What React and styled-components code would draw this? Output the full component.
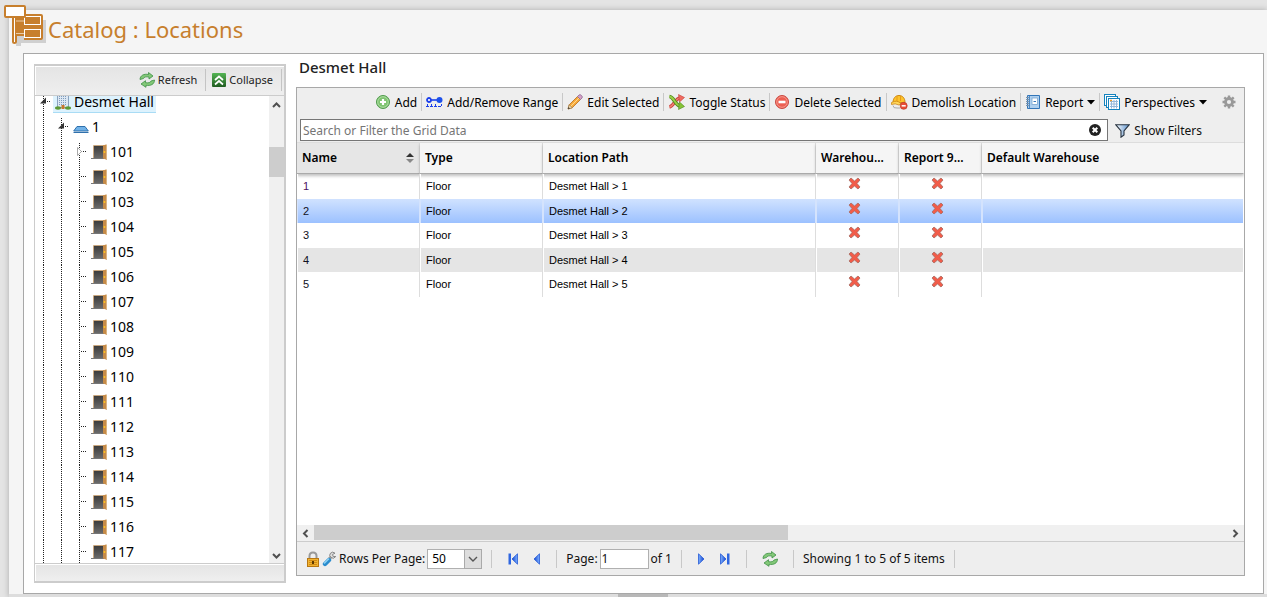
import styled, { createGlobalStyle } from "styled-components";

const GlobalStyle = createGlobalStyle`
    * {
        box-sizing : border-box;
    }

    body {
        margin : 0;
        font-family : "Trebuchet MS", "Noto Sans", "Open Sans", sans-serif;
        font-size : 12px;
        color : #111;
    }

    button, input, select {
        font-family : inherit;
        color : inherit;
    }
`;

const Page = styled.div`
    height : 100vh;
    padding : 10px 0 0 9px;
    background-color : #e4e4e4;
    display : flex;
    flex-direction : column;
    overflow : hidden;
`;

const Sheet = styled.div`
    flex : 1;
    min-height : 0;
    display : flex;
    flex-direction : column;
    background-color : #f5f5f5;
    box-shadow : 0 0 6px rgba(0,0,0,0.25);
`;

const Header = styled.header`
    height : 43px;
    flex : none;
    display : flex;
    align-items : flex-start;
`;

const Logo = styled.svg`
    width : 46px;
    height : 46px;
    flex : none;
    margin : -8px 0 0 -7px;
`;

const Heading = styled.h1`
    margin : 0;
    font-size : 22px;
    font-weight : 400;
    line-height : 38px;
    color : #c77f2d;
`;

const Panel = styled.main`
    flex : 1;
    min-height : 0;
    margin : 0 3px 0 14px;
    padding : 0 18px 10px 10px;
    border : 1px solid #a8a8a8;
    background-color : #fff;
    display : flex;
    gap : 10px;
`;

const Splitter = styled.div`
    height : 3px;
    flex : none;
    padding-left : 10px;
    background-color : #ddd;
    display : flex;
    justify-content : center;
`;

const Handle = styled.div`
    width : 50px;
    background-color : #b8b8b8;
`;

const Sidebar = styled.aside`
    width : 252px;
    flex : none;
    margin-top : 10px;
    border : 2px solid #ccc;
    border-left-width : 1px;
    display : flex;
    flex-direction : column;
`;

const SideBar = styled.div`
    height : ${(props) => props.$height}px;
    flex : none;
    padding : 0 2px 2px 0;
    background-image : linear-gradient(#e4e4e4, #efefef);
    border-bottom : ${(props) => (props.$line ? "1px solid #ccc" : "none")};
    border-top : ${(props) => (props.$line ? "none" : "1px solid #ccc")};
    box-shadow : inset 1px 1px #fff;
    display : flex;
    align-items : center;
    justify-content : flex-end;
`;

const SideButton = styled.button`
    height : 22px;
    padding : 0 8px 0 6px;
    border : none;
    border-right : 1px solid #c4c4c4;
    background : none;
    display : flex;
    align-items : center;
    gap : 3px;
    font-size : 11px;
    color : #222;
`;

const Scroller = styled.div`
    flex : 1;
    min-height : 0;
    display : flex;
    overflow : hidden;
`;

const Tree = styled.ul`
    flex : 1;
    margin : -6px 0 0;
    padding : 0;
    list-style : none;
    font-size : 14px;
    color : #000;
`;

const Node = styled.li`
    height : 25px;
    display : flex;
    align-items : center;
`;

const Guide = styled.svg`
    width : 18px;
    height : 25px;
    flex : none;
`;

const NodeLabel = styled.span`
    height : 21px;
    padding : 0 2px;
    display : flex;
    align-items : center;
    gap : 3px;
    line-height : 20px;
    background-color : ${(props) => (props.$active ? "#ddf2fd" : "transparent")};
    border-bottom : 1px solid ${(props) => (props.$active ? "#a9dcf5" : "transparent")};
`;

const Track = styled.div`
    flex : none;
    display : flex;
    flex-direction : ${(props) => (props.$vertical ? "column" : "row")};
    ${(props) => (props.$vertical ? "width : 15px" : "height : 16px")};
    background-color : #f0f0f0;
`;

const Thumb = styled.div`
    background-color : #cdcdcd;
    ${(props) => (props.$vertical ? "height : 30px; margin-top : 34px" : "width : 50%; height : 15px")};
`;

const Arrow = styled.svg`
    width : 17px;
    height : 17px;
    flex : none;
    align-self : center;
    fill : none;
    stroke : #505050;
    stroke-width : 2;
`;

const Spacer = styled.div`
    flex : 1;
`;

const Content = styled.section`
    flex : 1;
    min-width : 0;
    display : flex;
    flex-direction : column;
    padding-bottom : 7px;
`;

const Subheading = styled.h2`
    height : 33px;
    flex : none;
    margin : 0;
    padding-left : 3px;
    font-size : 15px;
    font-weight : 500;
    line-height : 26px;
    color : #222;
`;

const Grid = styled.div`
    flex : 1;
    min-height : 0;
    border : 1px solid #a8a8a8;
    display : flex;
    flex-direction : column;
`;

const Toolbar = styled.div`
    height : 30px;
    flex : none;
    padding : 0 4px 2px 0;
    background-color : #eee;
    display : flex;
    align-items : center;
    justify-content : flex-end;
`;

const Tool = styled.button`
    height : 18px;
    padding : 0 4px;
    border : none;
    border-right : ${(props) => (props.$last ? "none" : "1px solid #c8c8c8")};
    background : none;
    display : flex;
    align-items : center;
    gap : 4px;
    font-size : 12px;
    white-space : nowrap;
    color : #000;
`;

const SettingsTool = styled(Tool)`
    padding-left : 11px;
`;

const Search = styled.div`
    height : 24px;
    flex : none;
    padding : 1px 42px 0 3px;
    background-color : #eee;
    display : flex;
    gap : 7px;
`;

const SearchBox = styled.div`
    flex : 1;
    height : 22px;
    padding-right : 5px;
    border : 1px solid #767676;
    background-color : #fff;
    display : flex;
    align-items : center;
`;

const SearchInput = styled.input`
    flex : 1;
    padding : 0 2px;
    border : none;
    outline : none;
    background : none;
    font-size : 12px;

    &::placeholder {
        color : #757575;
    }
`;

const IconButton = styled.button`
    padding : 0;
    border : none;
    background : none;
    display : flex;
    align-items : center;
    gap : 4px;
    font-size : 12px;
    white-space : nowrap;
`;

const TableWrap = styled.div`
    flex : 1;
    min-height : 0;
    overflow : hidden;
    border-top : 1px solid #ddd;
`;

const Table = styled.table`
    width : 100%;
    table-layout : fixed;
    border-collapse : separate;
    border-spacing : 0;
    color : #000;
`;

const Th = styled.th`
    width : ${(props) => props.$width};
    height : 31px;
    padding : 0 5px 1px;
    border-right : 1px solid ${(props) => (props.$last ? "transparent" : "#ddd")};
    border-bottom : 1px solid #aaa;
    background-color : ${(props) => (props.$sorted ? "#e6e6e6" : "#f5f5f5")};
    box-shadow : 0 2px 3px rgba(0,0,0,0.25);
    font-size : 12px;
    font-weight : 600;
    text-align : left;
    white-space : nowrap;
    overflow : hidden;
    text-overflow : ellipsis;
`;

const Sort = styled.span`
    display : flex;
    justify-content : space-between;
    align-items : center;
`;

const Row = styled.tr`
    height : 24px;

    &:nth-child(odd) {
        height : 25px;
    }
`;

const Td = styled.td`
    padding : ${(props) => (props.$center ? "0 11px 2px 5px" : "0 5px 1px")};
    border-right : 1px solid ${(props) => (props.$last ? "transparent" : props.$selected ? "#d4e3fd" : "#ddd")};
    border-left : 1px solid ${(props) => (props.$selected ? "#d4e3fd" : "#fff")};
    background-clip : padding-box;
    background-color : ${(props) => (props.$striped ? "#e5e5e5" : "transparent")};
    background-image : ${(props) => (props.$selected ? "linear-gradient(#d0e2ff, #9cc1ff)" : "none")};
    font-family : Arial, "Liberation Sans", sans-serif;
    font-size : 11px;
    line-height : 16px;
    text-align : ${(props) => (props.$center ? "center" : "left")};
`;

const NameLink = styled.a`
    color : ${(props) => (props.$visited ? "#4b1060" : "#112")};
    text-decoration : none;
`;

const Pager = styled.div`
    height : 34px;
    flex : none;
    padding : 0 9px;
    background-color : #eee;
    border-top : 1px solid #ccc;
    display : flex;
    align-items : center;
`;

const Group = styled.div`
    height : 18px;
    padding : 0 ${(props) => props.$pad || 9}px;
    border-right : 1px solid #c8c8c8;
    display : flex;
    align-items : center;
    gap : ${(props) => props.$gap || 2}px;
    white-space : nowrap;

    &:first-child {
        padding-left : 0;
    }
`;

const SelectBox = styled.span`
    position : relative;
    display : flex;
`;

const Select = styled.select`
    width : 55px;
    height : 20px;
    padding : 0 4px;
    appearance : none;
    border : 1px solid #b0b0b0;
    border-radius : 0;
    background-color : #fff;
    font-size : 12px;
    color : #000;
`;

const Drop = styled.svg`
    position : absolute;
    top : 0;
    right : 0;
    width : 18px;
    height : 20px;
    pointer-events : none;
`;

const PageInput = styled.input`
    width : 49px;
    height : 20px;
    padding : 0 1px;
    border : 1px solid #b0b0b0;
    background-color : #fff;
    font-size : 12px;
`;

const RefreshIcon = () => (
    <svg width="16" height="16" viewBox="0 0 16 16">
        <path d="M1 7.5C1 3.5 5 1.500 9.500 2.500V0.500L14 4L10 7V5C7 4.500 5 5 4.500 6.500Z" fill="#83c878" stroke="#3e9145" strokeWidth="0.8" />
        <path d="M15.500 8C15.500 12.500 11.500 14 7 13.300V15.300L2 12L6.500 8.700V10.700C9.500 11.200 11.500 10.500 12 9Z" fill="#83c878" stroke="#3e9145" strokeWidth="0.8" />
    </svg>
);

const CollapseIcon = () => (
    <svg width="14" height="14" viewBox="0 0 14 14">
        <defs>
            <linearGradient id="collapse" x2="0" y2="1">
                <stop stopColor="#54b554" />
                <stop offset="1" stopColor="#205c20" />
            </linearGradient>
        </defs>
        <rect width="14" height="14" rx="1" fill="url(#collapse)" />
        <path d="M3 7L7 3.5L11 7M3 11.5L7 8L11 11.5" fill="none" stroke="#fff" strokeWidth="1.7" />
    </svg>
);

const BuildingIcon = () => (
    <svg width="16" height="16" viewBox="0 0 16 16">
        <rect x="2.5" y="0.5" width="11" height="13" fill="#dce7f3" stroke="#8ba3bf" />
        <path d="M4 2.5H12M4 4.5H12M4 6.5H12M4 8.5H12M4 10.5H12" stroke="#7d9cbd" strokeDasharray="1 1" />
        <rect x="6.5" y="11" width="3" height="4" fill="#c8772c" />
        <ellipse cx="3" cy="14" rx="3" ry="1.7" fill="#5c9a35" />
        <ellipse cx="13" cy="14" rx="3" ry="1.7" fill="#5c9a35" />
    </svg>
);

const FloorIcon = () => (
    <svg width="16" height="16" viewBox="0 0 16 16">
        <path d="M4 7.5H12L15.3 12H0.7Z" fill="#71b2e8" stroke="#2f70ac" />
        <path d="M0.500 13.500H15.500" stroke="#2f70ac" />
    </svg>
);

const DoorIcon = () => (
    <svg width="16" height="16" viewBox="0 0 16 16">
        <defs>
            <linearGradient id="door" x2="0" y2="1">
                <stop stopColor="#3c3c3c" />
                <stop offset="1" stopColor="#6a6a6a" />
            </linearGradient>
        </defs>
        <path d="M2.5 14V1.5H13" fill="none" stroke="#c9a77f" />
        <rect x="3" y="2" width="9" height="12" fill="url(#door)" />
        <path d="M0 14.500H13" stroke="#777" />
        <path d="M12 1.500L15 0.500V15.500L12 14.500Z" fill="#c68b48" />
        <path d="M15.500 0.500V16" stroke="#dcb583" />
        <circle cx="13.500" cy="8" r="1" fill="#ffc61f" />
    </svg>
);

const AddIcon = () => (
    <svg width="16" height="16" viewBox="0 0 16 16">
        <circle cx="8" cy="8" r="6.5" fill="#7fc471" stroke="#4f9a4c" />
        <circle cx="8" cy="8" r="5.3" fill="none" stroke="#b9e2ae" strokeWidth="0.8" />
        <path d="M8 5V11M5 8H11" stroke="#fff" strokeWidth="2.2" />
    </svg>
);

const RangeIcon = () => (
    <svg width="17" height="16" viewBox="0 0 17 16">
        <circle cx="3" cy="6" r="2" fill="#fff" stroke="#1c40ea" strokeWidth="1.8" />
        <path d="M5 6H12" stroke="#1c40ea" strokeWidth="1.6" />
        <circle cx="13.5" cy="6" r="3" fill="#1c50ea" />
        <path d="M1.500 10V12M5.500 10V12M9.500 10V12M15.500 10V12" stroke="#1c40ea" />
        <path d="M0 12.500H16" stroke="#1c40ea" strokeDasharray="3 1" />
    </svg>
);

const PencilIcon = () => (
    <svg width="16" height="16" viewBox="0 0 16 16">
        <path d="M1 15L2.2 10.8L10.500 2.500L13.500 5.500L5.200 13.800Z" fill="#f7a93a" stroke="#b56d1d" strokeWidth="0.8" />
        <path d="M3.800 12.200L12 4" stroke="#ffd98b" />
        <path d="M10.500 2.500L12 1Q13 0 14.500 1.500T15 4L13.500 5.500Z" fill="#d6a0c6" stroke="#8c6c94" strokeWidth="0.8" />
        <path d="M1 15L2.2 10.8L5.2 13.8Z" fill="#f4dfb8" stroke="#8d7041" strokeWidth="0.6" />
        <path d="M1 15L1.5 13L3 14.5Z" fill="#333" />
    </svg>
);

const ToggleIcon = () => (
    <svg width="17" height="16" viewBox="0 0 17 16">
        <path d="M1.500 13C6 12 7 4.500 12 4" fill="none" stroke="#c8403a" strokeWidth="3.4" />
        <path d="M1.500 13C6 12 7 4.500 12 4" fill="none" stroke="#f38377" strokeWidth="1.6" />
        <path d="M10.500 0.500L16.500 3.500L11.500 8Z" fill="#ef6b60" stroke="#c8403a" strokeWidth="0.6" />
        <path d="M1.500 2.500C6 3 7 11 12 12" fill="none" stroke="#4f8a1c" strokeWidth="3.6" />
        <path d="M1.500 2.500C6 3 7 11 12 12" fill="none" stroke="#9bcf45" strokeWidth="1.8" />
        <path d="M11.500 8L16.500 12.500L10.500 15.500Z" fill="#86c336" stroke="#4f8a1c" strokeWidth="0.6" />
    </svg>
);

const DeleteIcon = () => (
    <svg width="16" height="16" viewBox="0 0 16 16">
        <circle cx="8" cy="8" r="6.5" fill="#ed5f52" stroke="#c94b42" />
        <circle cx="8" cy="8" r="5.3" fill="none" stroke="#f7a59a" strokeWidth="0.8" />
        <path d="M4.500 8H11.500" stroke="#fff" strokeWidth="2.6" />
    </svg>
);

const DemolishIcon = () => (
    <svg width="17" height="16" viewBox="0 0 17 16">
        <path d="M2 9C2 4 4.500 1.500 8 1.500S14 4 14 8.500Z" fill="#fdc32c" stroke="#cc8714" />
        <path d="M6 2V7M9.500 2V7" stroke="#e79b17" />
        <path d="M0.500 8.500Q6 5.500 10 9.500L8 11Q4 9 0.500 10.500Z" fill="#ffd75b" stroke="#cc8714" strokeWidth="0.8" />
        <path d="M2 11.500Q2 14.500 6 14H9" fill="none" stroke="#aaa" />
        <circle cx="12.7" cy="11.8" r="3.5" fill="#e94e36" stroke="#bf3926" strokeWidth="0.7" />
        <path d="M10.700 11.800H14.700" stroke="#fff" strokeWidth="1.5" />
    </svg>
);

const ReportIcon = () => (
    <svg width="16" height="16" viewBox="0 0 16 16">
        <path d="M2.500 1.500H14.500V14.500H2.500Z" fill="#afd0ef" stroke="#3476b8" />
        <path d="M4.500 2V14" stroke="#4f8ac4" />
        <rect x="7" y="4" width="5.5" height="6.5" fill="#fff" stroke="#79a5d0" strokeWidth="0.8" />
        <path d="M8.500 7.500H11" stroke="#3476b8" />
        <path d="M1 3.500H4M1 5.500H4M1 7.500H4M1 9.500H4M1 11.500H4" stroke="#7d95ad" />
    </svg>
);

const ViewsIcon = () => (
    <svg width="16" height="16" viewBox="0 0 16 16">
        <rect x="0.5" y="0.5" width="11" height="11" fill="#fff" stroke="#1583be" />
        <rect x="2.5" y="2.5" width="11" height="11" fill="#fff" stroke="#1583be" />
        <rect x="4.5" y="4.5" width="11" height="11" fill="#fff" stroke="#1583be" />
        <path d="M6 7.500H14M6 10H14M6 12.500H14M7.500 6V14.500M10 6V14.500M12.500 6V14.500" stroke="#96b8da" />
        <path d="M6 6.500H8" stroke="#ef9d2c" strokeWidth="1.5" />
    </svg>
);

const CaretIcon = () => (
    <svg width="8" height="6" viewBox="0 0 8 6">
        <path d="M0 1H8L4 5.5Z" fill="#000" />
    </svg>
);

const GearIcon = () => (
    <svg width="14" height="14" viewBox="0 0 14 14">
        <circle cx="7" cy="7" r="3.5" fill="none" stroke="#999" strokeWidth="2.8" />
        <path d="M7 0.500V3M7 11V13.500M0.500 7H3M11 7H13.500M2.300 2.300L4 4M10 10L11.700 11.700M11.700 2.300L10 4M4 10L2.300 11.700" stroke="#999" strokeWidth="2.4" />
    </svg>
);

const ClearIcon = () => (
    <svg width="14" height="14" viewBox="0 0 14 14">
        <circle cx="7" cy="7" r="6" fill="#222" />
        <path d="M4.700 4.700L9.300 9.300M9.300 4.700L4.700 9.300" stroke="#fff" strokeWidth="2" />
    </svg>
);

const FunnelIcon = () => (
    <svg width="15" height="14" viewBox="0 0 15 14">
        <defs>
            <linearGradient id="funnel">
                <stop stopColor="#fff" />
                <stop offset="1" stopColor="#5b91cd" />
            </linearGradient>
        </defs>
        <path d="M0.700 0.700H14.300L9 7V11L6 13.200V7Z" fill="url(#funnel)" stroke="#26323f" strokeWidth="1.1" />
    </svg>
);

const SortIcon = () => (
    <svg width="8" height="10" viewBox="0 0 8 10">
        <path d="M0 4L4 0L8 4Z" fill="#333" />
        <path d="M0 6H8L4 10Z" fill="#888" />
    </svg>
);

const CrossIcon = () => (
    <svg width="13" height="13" viewBox="0 0 13 13">
        <path d="M1 3L3 1L6.500 4L10 1L12 3L9 6.500L12 10L10 12L6.500 9L3 12L1 10L4 6.500Z" fill="#f25c49" stroke="#a76b62" strokeWidth="0.8" strokeLinejoin="round" />
    </svg>
);

const LockIcon = () => (
    <svg width="14" height="16" viewBox="0 0 14 16">
        <path d="M3.500 8V5Q3.500 1.500 7 1.500T10.500 5V8" fill="none" stroke="#999" strokeWidth="2" />
        <rect x="1.500" y="7.500" width="11" height="8" fill="#f2b431" stroke="#b87713" />
        <path d="M3 9.500H11M3 11.500H11M3 13.500H11" stroke="#d08b17" />
        <path d="M7 10V13" stroke="#5d3900" strokeWidth="2" />
    </svg>
);

const WrenchIcon = () => (
    <svg width="15" height="16" viewBox="0 0 15 16">
        <path d="M7 8L10 5" stroke="#999" strokeWidth="3" />
        <path d="M13 2.200Q10.500 0 8.500 2.200T9 6.500T13.800 5.500L11.200 5.500L10.500 3.500Z" fill="#ddd" stroke="#888" />
        <path d="M3 13L7 9" stroke="#2b8ccd" strokeWidth="4.4" strokeLinecap="round" />
        <path d="M2.500 12L6.500 8" stroke="#8dd2f5" strokeWidth="1.6" strokeLinecap="round" />
    </svg>
);

const StepIcon = ({ back, bar }) => (
    <svg width="12" height="12" viewBox="0 0 12 12" transform={back ? "scale(-1 1)" : undefined}>
        <defs>
            <linearGradient id="step">
                <stop stopColor="#7db2ff" />
                <stop offset="1" stopColor="#1645cf" />
            </linearGradient>
        </defs>
        <path d="M1.500 0.800L7 6L1.500 11.200Z" fill="url(#step)" stroke="#2458d6" strokeWidth="0.8" />
        {bar && <rect x="8" y="0.5" width="2.5" height="11" fill="#2f66e0" />}
    </svg>
);

const locations = [];
for (let n = 101; n <= 117; n++) {
    locations.push(n);
}

const floors = [1, 2, 3, 4, 5];

const Line = ({ top = 0 }) => (
    <path d={`M8.5 ${top}V25`} stroke="#222" strokeDasharray="1 1" />
);

const Branch = ({ top, marker }) => (
    <Guide viewBox="0 0 18 25">
        <Line top={top} />
        <path d="M10 11.5H15" stroke="#222" strokeDasharray="1 1" />
        {marker === "open" && <path d="M5 13.500H11V7.500Z" fill="#333" />}
        {marker === "closed" && <path d="M6.500 7.500V15.500L10.500 11.500Z" fill="#fff" stroke="#aaa" />}
    </Guide>
);

const Pass = () => (
    <Guide viewBox="0 0 18 25"><Line /></Guide>
);

const LocationTree = () => (
    <Sidebar>
        <SideBar $height={30} $line>
            <SideButton><RefreshIcon />Refresh</SideButton>
            <SideButton><CollapseIcon />Collapse</SideButton>
        </SideBar>
        <Scroller>
            <Tree>
                <Node>
                    <Branch top={0} marker="open" />
                    <NodeLabel $active><BuildingIcon />Desmet Hall</NodeLabel>
                </Node>
                <Node>
                    <Pass />
                    <Branch top={3} marker="open" />
                    <NodeLabel><FloorIcon />1</NodeLabel>
                </Node>
                {locations.map((n, i) => (
                    <Node key={n}>
                        <Pass />
                        <Pass />
                        <Branch top={i === 0 ? 3 : 0} marker={i === 0 ? "closed" : ""} />
                        <NodeLabel><DoorIcon />{n}</NodeLabel>
                    </Node>
                ))}
            </Tree>
            <Track $vertical>
                <Arrow viewBox="0 0 17 17"><path d="M5 11L8.500 7.500L12 11" /></Arrow>
                <Thumb $vertical />
                <Spacer />
                <Arrow viewBox="0 0 17 17"><path d="M5 8L8.500 11.500L12 8" /></Arrow>
            </Track>
        </Scroller>
        <SideBar $height={18} />
    </Sidebar>
);

const LocationTable = () => (
    <TableWrap>
        <Table>
            <thead>
                <tr>
                    <Th $width="123px" $sorted><Sort>Name<SortIcon /></Sort></Th>
                    <Th $width="123px">Type</Th>
                    <Th $width="273px">Location Path</Th>
                    <Th $width="83px">Warehou...</Th>
                    <Th $width="83px">Report 9...</Th>
                    <Th $last>Default Warehouse</Th>
                </tr>
            </thead>
            <tbody>
                {floors.map((n) => {
                    const look = { $selected: n === 2, $striped: n === 4 };
                    return (
                        <Row key={n}>
                            <Td {...look}><NameLink href="#" $visited={n === 1}>{n}</NameLink></Td>
                            <Td {...look}>Floor</Td>
                            <Td {...look}>Desmet Hall &gt; {n}</Td>
                            <Td {...look} $center><CrossIcon /></Td>
                            <Td {...look} $center><CrossIcon /></Td>
                            <Td {...look} $last />
                        </Row>
                    );
                })}
            </tbody>
        </Table>
    </TableWrap>
);

const App = () => {
    return (
        <Page>
            <GlobalStyle />
            <Sheet>
                <Header>
                    <Logo viewBox="0 0 46 46">
                        <path d="M16 18H44V41H19V44H14Z" fill="#000" opacity="0.15" />
                        <path d="M11 13H23V12H39Q41 12 41 14V36Q41 38 39 38H22V34H15V40Q15 42 12.500 42T10 40V13Z" fill="#c77f2d" />
                        <path d="M12.500 15V40" stroke="#fff" />
                        <path d="M14 19H22M14 31.500H22" stroke="#f3dfc6" strokeWidth="0.8" />
                        <rect x="22.500" y="14.500" width="16" height="8" fill="#c77f2d" stroke="#fff" />
                        <rect x="22.500" y="27.500" width="16" height="8" fill="#c77f2d" stroke="#fff" />
                        <rect x="3" y="4" width="20" height="11" rx="1" fill="#fff" stroke="#c77f2d" strokeWidth="2" />
                    </Logo>
                    <Heading>Catalog : Locations</Heading>
                </Header>
                <Panel>
                    <LocationTree />
                    <Content>
                        <Subheading>Desmet Hall</Subheading>
                        <Grid>
                            <Toolbar>
                                <Tool><AddIcon />Add</Tool>
                                <Tool><RangeIcon />Add/Remove Range</Tool>
                                <Tool><PencilIcon />Edit Selected</Tool>
                                <Tool><ToggleIcon />Toggle Status</Tool>
                                <Tool><DeleteIcon />Delete Selected</Tool>
                                <Tool><DemolishIcon />Demolish Location</Tool>
                                <Tool><ReportIcon />Report<CaretIcon /></Tool>
                                <Tool $last><ViewsIcon />Perspectives<CaretIcon /></Tool>
                                <SettingsTool $last aria-label="Settings"><GearIcon /></SettingsTool>
                            </Toolbar>
                            <Search>
                                <SearchBox>
                                    <SearchInput aria-label="Search" placeholder="Search or Filter the Grid Data" />
                                    <IconButton aria-label="Clear"><ClearIcon /></IconButton>
                                </SearchBox>
                                <IconButton><FunnelIcon />Show Filters</IconButton>
                            </Search>
                            <LocationTable />
                            <Track>
                                <Arrow viewBox="0 0 17 17"><path d="M10.500 5L7 8.500L10.500 12" /></Arrow>
                                <Thumb />
                                <Spacer />
                                <Arrow viewBox="0 0 17 17"><path d="M6.500 5L10 8.500L6.500 12" /></Arrow>
                            </Track>
                            <Pager>
                                <Group>
                                    <LockIcon />
                                    <WrenchIcon />
                                    <label htmlFor="rows">Rows Per Page:</label>
                                    <SelectBox>
                                        <Select id="rows" defaultValue="50"><option>50</option></Select>
                                        <Drop viewBox="0 0 18 20">
                                            <rect x="0.500" y="0.500" width="17" height="19" fill="#ddd" stroke="#aaa" />
                                            <path d="M5 8L9 12L13 8" fill="none" stroke="#555" strokeWidth="1.4" />
                                        </Drop>
                                    </SelectBox>
                                </Group>
                                <Group $pad={15} $gap={10}>
                                    <IconButton aria-label="First page"><StepIcon back bar /></IconButton>
                                    <IconButton aria-label="Previous page"><StepIcon back /></IconButton>
                                </Group>
                                <Group>
                                    <label htmlFor="page">Page:</label>
                                    <PageInput id="page" defaultValue="1" />
                                    of 1
                                </Group>
                                <Group $pad={15} $gap={10}>
                                    <IconButton aria-label="Next page"><StepIcon /></IconButton>
                                    <IconButton aria-label="Last page"><StepIcon bar /></IconButton>
                                </Group>
                                <Group $pad={15}>
                                    <IconButton aria-label="Reload"><RefreshIcon /></IconButton>
                                </Group>
                                <Group>Showing 1 to 5 of 5 items</Group>
                            </Pager>
                        </Grid>
                    </Content>
                </Panel>
                <Splitter><Handle /></Splitter>
            </Sheet>
        </Page>
    );
};

export default App;
